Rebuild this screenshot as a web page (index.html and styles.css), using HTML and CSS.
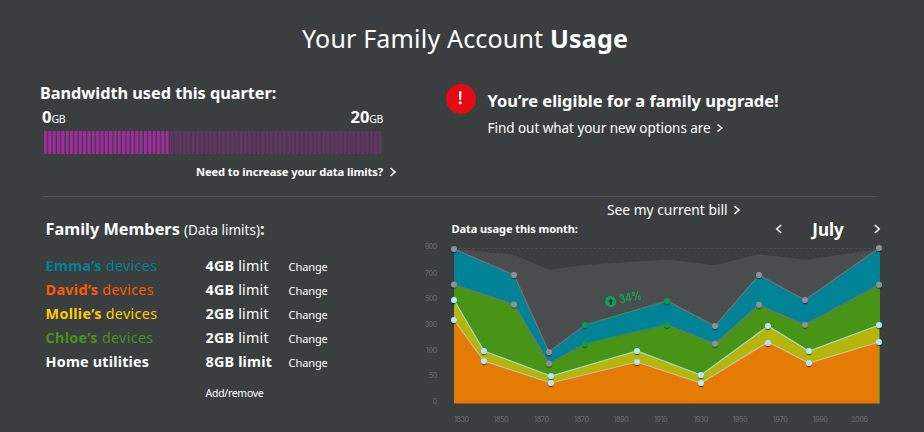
FILE: index.html
```html
<!DOCTYPE html>
<html lang="en">
<head>
<meta charset="utf-8">
<title>Family Account Usage</title>
<link rel="stylesheet" href="styles.css">
</head>
<body>
<main class="page">
  <h1 class="title">Your Family Account <b>Usage</b></h1>

  <section class="overview">
    <div class="bandwidth">
      <h2 class="bandwidth-title">Bandwidth used this quarter:</h2>
      <div class="scale"><span class="amount">0<small>GB</small></span><span class="amount">20<small>GB</small></span></div>
      <svg class="meter" width="339" height="23" viewBox="0 0 339 23">
        <defs>
          <pattern id="used" width="4.345" height="23" patternUnits="userSpaceOnUse"><rect width="3" height="23" rx=".6" fill="#a229a2"/></pattern>
          <pattern id="free" width="4.345" height="23" patternUnits="userSpaceOnUse"><rect width="3" height="23" rx=".6" fill="#653366"/></pattern>
        </defs>
        <rect width="126" height="23" fill="url(#used)"/>
        <rect x="126" width="213" height="23" fill="url(#free)"/>
      </svg>
      <a class="increase">Need to increase your data limits?<svg class="chev" width="8" height="10" viewBox="0 0 8 10"><path d="M1.5 1.2 6 5 1.5 8.8"/></svg></a>
    </div>
    <div class="upgrade">
      <svg class="alert" width="30" height="30" viewBox="0 0 30 30"><circle cx="15" cy="15" r="15" fill="#e60a14"/><path d="M12.9 7.2h2.6l-.4 8.8h-1.8z" fill="#fff"/><circle cx="14.2" cy="18.7" r="1.5" fill="#fff"/></svg>
      <div>
        <h2 class="upgrade-title">You’re eligible for a family upgrade!</h2>
        <a class="upgrade-link">Find out what your new options are<svg class="chev" width="8" height="10" viewBox="0 0 8 10"><path d="M1.5 1.5 5.8 5 1.5 8.5"/></svg></a>
      </div>
    </div>
  </section>

  <section class="details">
    <div class="members">
      <h2 class="members-title">Family Members <span>(Data limits)</span>:</h2>
      <div class="member"><span class="name emma"><b>Emma’s</b> devices</span><span class="limit"><b>4GB</b> limit</span><a class="change">Change</a></div>
      <div class="member"><span class="name david"><b>David’s</b> devices</span><span class="limit"><b>4GB</b> limit</span><a class="change">Change</a></div>
      <div class="member"><span class="name mollie"><b>Mollie’s</b> devices</span><span class="limit"><b>2GB</b> limit</span><a class="change">Change</a></div>
      <div class="member"><span class="name chloe"><b>Chloe’s</b> devices</span><span class="limit"><b>2GB</b> limit</span><a class="change">Change</a></div>
      <div class="member"><span class="name"><b>Home utilities</b></span><span class="limit"><b>8GB limit</b></span><a class="change">Change</a></div>
      <a class="add">Add/remove</a>
    </div>
    <div class="usage">
      <a class="bill">See my current bill<svg class="chev" width="8" height="10" viewBox="0 0 8 10"><path d="M1.5 1.2 6 5 1.5 8.8"/></svg></a>
      <div class="month-bar">
        <h3 class="usage-title">Data usage this month:</h3>
        <div class="month">
          <svg class="chev" width="8" height="10" viewBox="0 0 8 10"><path d="M6.2 1 1.8 5 6.2 9"/></svg>
          <b>July</b>
          <svg class="chev" width="8" height="10" viewBox="0 0 8 10"><path d="M1.8 1 6.2 5 1.8 9"/></svg>
        </div>
      </div>
      <svg class="chart" width="500" height="192" viewBox="424 240 500 192">
        <defs><filter id="shade" x="-50%" y="-50%" width="200%" height="200%"><feDropShadow dx="0" dy="1.2" stdDeviation=".7" flood-color="#000" flood-opacity=".5"/></filter></defs>
        <path d="M454 248.5H879" stroke="#4d5051" stroke-width=".8" stroke-dasharray="3 1.5"/>
        <path d="M454 249 510 254.2Q514 254.6 518 256.3L545 268.3Q549 270 553 269.2L581 265.5Q585 265 589 264.8L663 259.8Q667 259.5 671 260L711 264.8Q715 265.3 719 264.2L755 255Q759 254 763 254.7L801 259.3Q805 259.8 809 259.2L879 249V403H454Z" fill="#4a4d4e"/>
        <path d="M454 249 514 275 549 352 585 325 667 301 715 326 759 275 805 300 880 248V403H454Z" fill="#008297"/>
        <path d="M454 284.5 514 304.5 549 363.5 585 343.7 667 324.7 715 343.7 759 305 805 324.7 880 284.7V403H454Z" fill="#489417"/>
        <path d="M454 300 484 351 551 376 637 351 701 375 768 326 809 351 879 325V403H454Z" fill="#b5b50b"/>
        <path d="M454 320 484 361 551 383 637 362 701 383 768 342 809 363 879 342V403H454Z" fill="#e47b04"/>
        <path d="M454 403.4H879.5" stroke="#b84d24" stroke-width="1"/>
        <g class="line grey">
          <path d="M454 249 514 275 549 352 585 325 667 301 715 326 759 275 805 300 879 248"/>
          <path d="M454 284.5 514 304.5 549 363.5 585 343.7 667 324.7 715 343.7 759 305 805 324.7 879 284.7"/>
        </g>
        <g class="line green"><path d="M585 325 667 301M585 343.7 667 324.7"/></g>
        <g class="line pale">
          <path d="M454 300 484 351 551 376 637 351 701 375 768 326 809 351 879 325"/>
          <path class="lower" d="M454 320 484 361 551 383 637 362 701 383 768 342 809 363 879 342"/>
        </g>
        <g fill="#8f9197" filter="url(#shade)">
          <circle cx="454" cy="249" r="3"/><circle cx="514" cy="275" r="3"/><circle cx="549" cy="352" r="3"/><circle cx="715" cy="326" r="3"/><circle cx="759" cy="275" r="3"/><circle cx="805" cy="300" r="3"/><circle cx="879" cy="248" r="3"/>
          <circle cx="454" cy="284.5" r="3"/><circle cx="514" cy="304.5" r="3"/><circle cx="549" cy="363.5" r="3"/><circle cx="715" cy="343.7" r="3"/><circle cx="759" cy="304.7" r="3"/><circle cx="805" cy="324.7" r="3"/><circle cx="879" cy="284.7" r="3"/>
        </g>
        <g fill="#109b59" filter="url(#shade)"><circle cx="585" cy="325" r="3"/><circle cx="667" cy="301" r="3"/><circle cx="585" cy="343.7" r="3"/><circle cx="667" cy="324.7" r="3"/></g>
        <g fill="#b5e6fa" filter="url(#shade)">
          <circle cx="454" cy="300" r="3"/><circle cx="484" cy="351" r="3"/><circle cx="551" cy="376" r="3"/><circle cx="637" cy="351" r="3"/><circle cx="701" cy="375" r="3"/><circle cx="768" cy="326" r="3"/><circle cx="809" cy="351" r="3"/><circle cx="879" cy="325" r="3"/>
          <circle cx="454" cy="320" r="3"/><circle cx="484" cy="361" r="3"/><circle cx="551" cy="383" r="3"/><circle cx="637" cy="362" r="3"/><circle cx="701" cy="383" r="3"/><circle cx="768" cy="343" r="3"/><circle cx="809" cy="363" r="3"/><circle cx="879" cy="342" r="3"/>
        </g>
        <circle cx="610.5" cy="301.5" r="5.5" fill="#12a05c"/>
        <path d="M610.8 298.6 613.3 301.5H612V304.7H609.6V301.5H608.3Z" fill="#24352e"/>
        <text class="growth" x="620.3" y="303.8" transform="rotate(-12 620.3 303.8)" textLength="22.5" lengthAdjust="spacingAndGlyphs">34%</text>
        <g class="axis" text-anchor="end">
          <text x="437.3" y="249.3" textLength="12.3">900</text><text x="437.3" y="276.2" textLength="12.3">700</text><text x="437.3" y="301.3" textLength="12.3">500</text><text x="437.3" y="327.2" textLength="12.3">300</text><text x="437.3" y="352.5" textLength="11.5">100</text><text x="437.3" y="378.2" textLength="8.3">50</text><text x="437.3" y="403.8">0</text>
        </g>
        <g class="axis">
          <text x="454" y="422" textLength="15">1830</text><text x="493.7" y="422" textLength="15">1850</text><text x="534" y="422" textLength="15">1870</text><text x="574" y="422" textLength="15">1870</text><text x="613.7" y="422" textLength="15">1890</text><text x="654" y="422" textLength="13.5">1910</text><text x="693.7" y="422" textLength="14.5">1930</text><text x="732.5" y="422" textLength="15">1950</text><text x="772.7" y="422" textLength="15">1970</text><text x="812.7" y="422" textLength="15">1990</text><text x="851" y="422" textLength="17">2006</text>
        </g>
      </svg>
    </div>
  </section>
</main>
</body>
</html>
```
FILE: styles.css
```css
* { box-sizing: border-box; margin: 0; padding: 0; }
body { width: 924px; height: 432px; overflow: hidden; background: #3b3e3f; color: #fff; font-family: "Noto Sans", sans-serif; }
.page { height: 432px; }
a, b, span, h1, h2, h3 { white-space: nowrap; }
.chev { fill: none; stroke: #fff; stroke-width: 1.6; flex: none; }

.title { height: 77px; padding-left: 302px; font-size: 25px; line-height: 76px; font-weight: 400; letter-spacing: .18px; }

.overview { display: grid; grid-template-columns: 406px 1fr; height: 119px; padding-left: 40px; }
.bandwidth { width: 360px; }
.bandwidth-title { font-size: 16.3px; line-height: 32px; letter-spacing: -.02px; }
.scale { display: flex; justify-content: space-between; width: 343px; height: 22px; padding-left: 2px; }
.amount { font-size: 16.5px; line-height: 15px; font-weight: 700; }
.amount small { font-size: 10.5px; font-weight: 400; letter-spacing: -.4px; }
.meter { display: block; margin-left: 4px; }
.increase { display: flex; align-items: center; justify-content: flex-end; gap: 6px; width: 357px; height: 35px; font-size: 11.2px; letter-spacing: -.1px; font-weight: 700; }

.upgrade { display: flex; gap: 11.5px; padding-top: 7px; }
.alert { flex: none; }
.upgrade-title { font-size: 16.5px; line-height: 34px; }
.upgrade-link { display: flex; align-items: center; gap: 5px; font-size: 13.5px; line-height: 20px; letter-spacing: -.04px; }

.details { display: grid; grid-template-columns: 381px 1fr; margin-left: 43px; height: 236px; background: linear-gradient(#505354, #505354) no-repeat 0 0 / 833px 1px; }
.members { padding-left: 2.6px; }
.members-title { height: 58px; padding-top: 17px; font-size: 16.3px; line-height: 32px; }
.members-title span { font-size: 13.5px; font-weight: 400; }
.member { display: grid; grid-template-columns: 160px 83px 1fr; height: 24px; font-size: 14.3px; line-height: 23px; }
.name { letter-spacing: .33px; }
.name:not(.emma):not(.david):not(.mollie):not(.chloe) { letter-spacing: .22px; }
.limit { letter-spacing: .2px; }
.emma { color: #008297; }
.david { color: #ff5a00; }
.mollie { color: #ffcc05; }
.chloe { color: #489417; }
.change { font-size: 11px; line-height: 25px; letter-spacing: -.1px; }
.add { display: block; padding: 9px 0 0 160px; font-size: 10.5px; line-height: 20px; letter-spacing: -.3px; }

.usage { display: flex; flex-direction: column; }
.bill { display: flex; align-items: center; gap: 5px; height: 22px; margin-left: 183px; padding-top: 5px; font-size: 13.8px; }
.month-bar { display: flex; justify-content: space-between; width: 457px; height: 22px; padding-left: 27.5px; }
.usage-title { font-size: 11px; line-height: 21px; letter-spacing: -.07px; }
.month { display: flex; align-items: center; justify-content: space-between; width: 106px; font-size: 17px; line-height: 23px; }
.chart { display: block; }
.line { fill: none; stroke-width: 1.2; }
.grey { stroke: #6d7475; }
.green { stroke: #2b8f57; }
.pale { stroke: #9fdcc9; }
.lower { stroke: #c3c3ad; }
.axis { fill: #64686a; font: 500 7px Inter, sans-serif; }
.growth { fill: #12a05c; font: 600 12.5px Inter, sans-serif; }
```
